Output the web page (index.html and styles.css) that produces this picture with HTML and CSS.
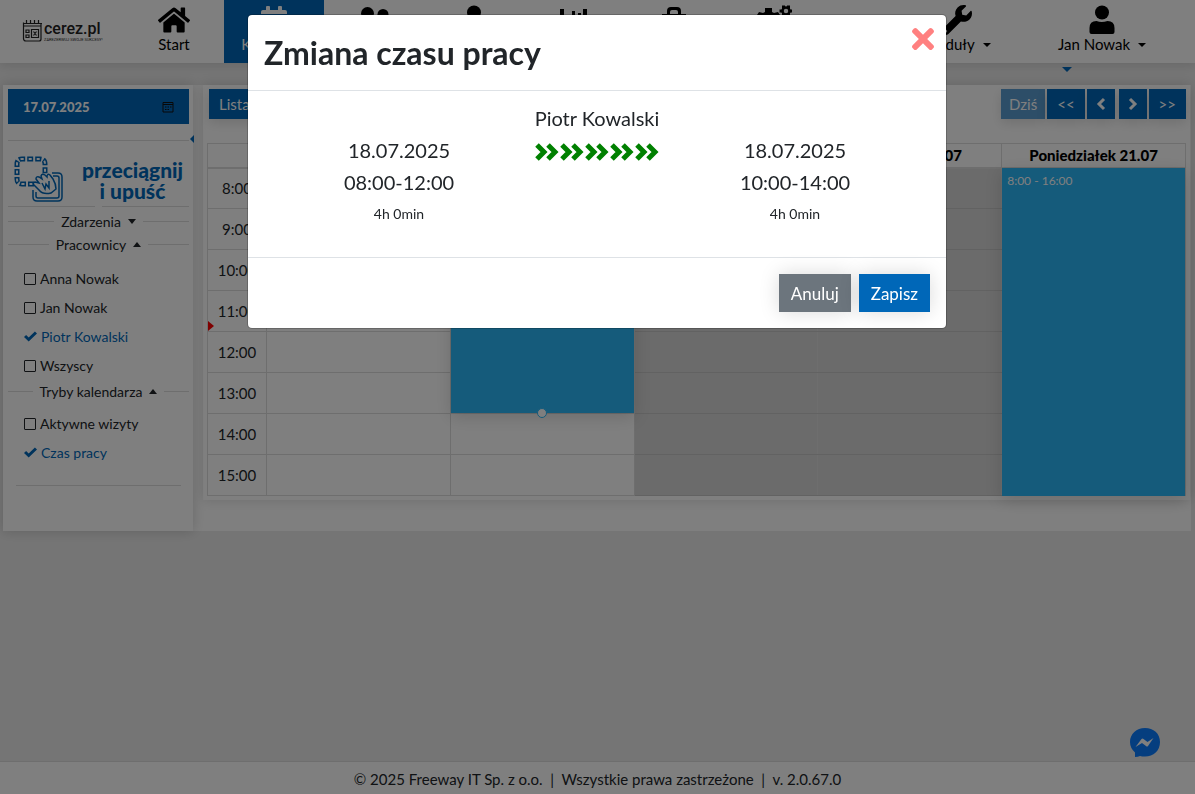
FILE: index.html
```html
<!DOCTYPE html>
<html lang="pl">
<head>
  <meta charset="utf-8">
  <title>cerez.pl - Kalendarz</title>
  <meta name="viewport" content="width=device-width, initial-scale=1.0">
  <link rel="stylesheet" href="styles.css">
</head>
<body>
  <header class="topbar">
    <a href="#" class="logo">
      <svg width="21" height="22" viewBox="0 0 21 22" fill="none" stroke="#222" stroke-width="1.2">
        <path d="M1 3.500h19M1.500 2.500v16q0 2.500 2.500 2.500h13q2 0 2-2v-15M4.500 0v4M8.500 0v4M12.500 0v4M16.500 0v4M1 6h18"/>
        <path d="M4 10h3v2.500H4zM4 15h3v2.500H4zM9.500 9.500h7v8h-7zM11.500 11.500l3 4M14.500 11.500l-3 4"/>
      </svg>
      <span class="logo-text">
        <span class="logo-name">cerez.pl</span>
        <span class="logo-sub">ZAREZERWUJ SWOJE SUKCESY!</span>
      </span>
    </a>
    <nav class="nav">
      <a href="#" class="nav-item">
        <svg class="nav-icon" viewBox="0 0 576 512"><path d="M280.37 148.26L96 300.11V464a16 16 0 0 0 16 16l112.06-.29a16 16 0 0 0 15.92-16V368a16 16 0 0 1 16-16h64a16 16 0 0 1 16 16v95.64a16 16 0 0 0 16 16.05L464 480a16 16 0 0 0 16-16V300L295.67 148.26a12.19 12.19 0 0 0-15.3 0zM571.6 251.47L488 182.56V44.05a12 12 0 0 0-12-12h-56a12 12 0 0 0-12 12v72.61L318.47 43a48 48 0 0 0-61 0L4.34 251.47a12 12 0 0 0-1.6 16.9l25.5 31A12 12 0 0 0 45.15 301l235.22-193.74a12.19 12.19 0 0 1 15.3 0L530.9 301a12 12 0 0 0 16.9-1.6l25.5-31a12 12 0 0 0-1.7-16.93z"/></svg>
        <span>Start</span>
      </a>
      <a href="#" class="nav-item active">
        <svg class="nav-icon" viewBox="0 0 32 30"><path d="M3 9V7q0-2 2-2h3V2q0-1 1-1h2q1 0 1 1v3h8V2q0-1 1-1h2q1 0 1 1v3h3q2 0 2 2v2zM3 11h26v16q0 2-2 2H5q-2 0-2-2z"/></svg>
        <span>Kalendarz</span>
      </a>
      <a href="#" class="nav-item" aria-label="Klienci">
        <svg class="nav-icon" viewBox="0 0 32 30"><circle cx="9.500" cy="8.500" r="6.500"/><circle cx="25" cy="9.500" r="5.500"/><path d="M0 26v-3q0-6 6-6h7q6 0 6 6v3zM21 26v-4q0-3-1-4h7q5 0 5 5v3z"/></svg>
      </a>
      <a href="#" class="nav-item" aria-label="Pracownicy">
        <svg class="nav-icon" viewBox="0 0 32 30"><circle cx="16" cy="7.500" r="7"/><path d="M3 29v-5q0-7 7-7h12q7 0 7 7v5z"/></svg>
      </a>
      <a href="#" class="nav-item" aria-label="Raporty">
        <svg class="nav-icon" viewBox="0 0 32 30"><path d="M2 4h4v22H2zM8 15h3v9H8zM14 6h3v18h-3zM20 8h3v16h-3zM25 4h4v20h-4zM2 26h28v3H2z"/></svg>
      </a>
      <a href="#" class="nav-item" aria-label="Magazyn">
        <svg class="nav-icon" viewBox="0 0 32 30"><path d="M9 9V6q0-4 4-4h6q4 0 4 4v3h5v19H4V9zM12 9h8V7q0-2-2-2h-4q-2 0-2 2z" fill-rule="evenodd"/></svg>
      </a>
      <a href="#" class="nav-item" aria-label="Ustawienia">
        <svg class="nav-icon" viewBox="0 0 32 30"><path d="M-1 10l2-3 4 1 2-1V3h7v4l2 1 4-1 2 3 1 5-2 2-2 5-4 1-1 4H7l-1-4-4-1-3-5 2-2z"/><circle cx="28" cy="6" r="3.500" fill="none" stroke="#000" stroke-width="2.500"/><path d="M24 .5h3V4h-3zM29 .5h3V4h-3zM21.500 4.500H24v3h-2.500zM32 4.500h2v3h-2zM24 8h3v3.500h-3zM29 8h3v3.500h-3z"/></svg>
      </a>
      <a href="#" class="nav-item nav-modules">
        <svg class="nav-icon" viewBox="0 0 512 512"><path d="M507.73 109.1c-2.24-9.03-13.54-12.09-20.12-5.51l-74.36 74.36-67.88-11.31-11.31-67.88 74.36-74.36c6.62-6.62 3.43-17.9-5.66-20.16-47.38-11.74-99.55.91-136.58 37.93-39.64 39.64-50.55 97.1-34.05 147.2L18.74 402.76c-24.99 24.99-24.99 65.51 0 90.5 24.99 24.99 65.51 24.99 90.5 0l213.21-213.21c50.12 16.71 107.47 5.68 147.37-34.22 37.07-37.07 49.7-89.32 37.91-136.73zM64 472c-13.25 0-24-10.75-24-24 0-13.26 10.75-24 24-24s24 10.74 24 24c0 13.25-10.75 24-24 24z"/></svg>
        <span class="caret">Moduły</span>
      </a>
      <a href="#" class="nav-item nav-user">
        <svg class="nav-icon" viewBox="0 0 32 30"><circle cx="16" cy="7.500" r="7"/><path d="M3.500 27v-4q0-7 7-7 5 2 11 0 7 0 7 7v4q0 2-2 2h-21q-2 0-2-2z"/></svg>
        <span class="caret">Jan Nowak</span>
      </a>
    </nav>
    <span class="topbar-toggle"></span>
  </header>

  <main class="page">
    <aside class="sidebar">
      <span class="sidebar-toggle"></span>
      <button type="button" class="date">
        17.07.2025
        <svg width="12" height="12" viewBox="0 0 12 12" fill="none" stroke="#111"><path d="M1 1.500h10v9.500H1zM1 3.500h10M3 6h1.500M5.500 6H7M8 6h1.500M3 8.500h1.500M5.500 8.500H7"/></svg>
      </button>
      <hr class="line">
      <div class="drag">
        <svg width="50" height="47" viewBox="0 0 50 47" fill="none" stroke="#0067b8">
          <path d="M20 28H8q-5 0-5-5V8q0-5 5-5h18q5 0 5 5v10" stroke-width="5" stroke-dasharray="6 2"/>
          <path d="M20 28H8q-5 0-5-5V8q0-5 5-5h18q5 0 5 5v10" stroke="#fff" stroke-width="2" stroke-dasharray="3 5" stroke-dashoffset="-1.500"/>
          <path d="M38 17h6q4 0 4 4v20q0 4-4 4H23q-4 0-4-4v-7M39 20h4q2 0 2 2v18q0 2-2 2H24q-2 0-2-2v-4" stroke-width="1.500"/>
          <path d="M20 29q-2-2 1-3l4 1-3-4q0-3 3-2l3 2-1-3q1-3 4-1l2 2q0-4 3-2l3 4q3 5 3 10l-5 4q-8 2-12-3zM28 27l3 6 1-5 3 4V25" fill="#fff" stroke-width="1.500"/>
        </svg>
        <span class="drag-text">przeciągnij<br>i upuść</span>
      </div>
      <div class="divider divider-empty"></div>
      <button type="button" class="divider">Zdarzenia <i class="arrow down"></i></button>
      <button type="button" class="divider">Pracownicy <i class="arrow up"></i></button>
      <div class="checks">
        <label><input type="checkbox">Anna Nowak</label>
        <label><input type="checkbox">Jan Nowak</label>
        <label><input type="checkbox" checked>Piotr Kowalski</label>
        <label><input type="checkbox">Wszyscy</label>
      </div>
      <button type="button" class="divider">Tryby kalendarza <i class="arrow up"></i></button>
      <div class="checks checks-modes">
        <label><input type="checkbox">Aktywne wizyty</label>
        <label><input type="checkbox" checked>Czas pracy</label>
      </div>
      <hr class="line line-short">
    </aside>

    <section class="calendar">
      <div class="toolbar">
        <button type="button" class="tool tool-list">Lista</button>
        <button type="button" class="tool tool-today" disabled>Dziś</button>
        <button type="button" class="tool">&lt;&lt;</button>
        <button type="button" class="tool tool-arrow" aria-label="Poprzedni"><svg width="10" height="14" viewBox="0 0 10 14"><path d="M8 2L3 7l5 5"/></svg></button>
        <button type="button" class="tool tool-arrow tool-next" aria-label="Następny"><svg width="10" height="14" viewBox="0 0 10 14"><path d="M2 2l5 5-5 5"/></svg></button>
        <button type="button" class="tool">&gt;&gt;</button>
      </div>
      <table class="grid">
        <thead>
          <tr>
            <th class="hour"></th>
            <th>Czwartek 17.07</th>
            <th>Piątek 18.07</th>
            <th>Sobota 19.07</th>
            <th>Niedziela 20.07</th>
            <th>Poniedziałek 21.07</th>
          </tr>
        </thead>
        <tbody>
          <tr>
            <td class="hour">8:00</td>
            <td></td>
            <td><div class="event event-short" aria-label="8:00 - 14:00"><span class="handle"></span></div></td>
            <td class="off"></td>
            <td class="off"></td>
            <td><div class="event">8:00 - 16:00</div></td>
          </tr>
          <tr><td class="hour">9:00</td><td></td><td></td><td class="off"></td><td class="off"></td><td></td></tr>
          <tr><td class="hour">10:00</td><td></td><td></td><td class="off"></td><td class="off"></td><td></td></tr>
          <tr><td class="hour">11:00<span class="now"></span></td><td></td><td></td><td class="off"></td><td class="off"></td><td></td></tr>
          <tr><td class="hour">12:00</td><td></td><td></td><td class="off"></td><td class="off"></td><td></td></tr>
          <tr><td class="hour">13:00</td><td></td><td></td><td class="off"></td><td class="off"></td><td></td></tr>
          <tr><td class="hour">14:00</td><td></td><td></td><td class="off"></td><td class="off"></td><td></td></tr>
          <tr><td class="hour">15:00</td><td></td><td></td><td class="off"></td><td class="off"></td><td></td></tr>
        </tbody>
      </table>
    </section>
  </main>

  <footer class="footer">© 2025 Freeway IT Sp. z o.o. &nbsp;|&nbsp; Wszystkie prawa zastrzeżone &nbsp;|&nbsp; v. 2.0.67.0</footer>

  <a href="#" class="messenger" aria-label="Messenger">
    <svg width="30" height="30" viewBox="0 0 30 30"><path d="M15 0C6.500 0 0 6 0 14q0 6 5 10.500V29q3 0 5-1 2 .6 5 .6c8.500 0 15-6 15-14.600S23.500 0 15 0z" fill="#0a7cff"/><path d="M5.500 19l6-8q1-1 2 0l4 3 6-4-5.500 8q-1 1-2 0l-4-3z" fill="#fff"/></svg>
  </a>

  <div class="backdrop"></div>

  <div class="modal" role="dialog" aria-labelledby="modal-title">
    <div class="modal-header">
      <h2 id="modal-title">Zmiana czasu pracy</h2>
      <button type="button" class="close" aria-label="Zamknij">
        <svg width="22" height="32" viewBox="0 0 352 512"><path d="M242.72 256l100.07-100.07c12.28-12.28 12.28-32.19 0-44.48l-22.24-22.24c-12.28-12.28-32.19-12.28-44.48 0L176 189.28 75.93 89.21c-12.28-12.28-32.19-12.28-44.48 0L9.21 111.45c-12.28 12.28-12.28 32.19 0 44.48L109.28 256 9.21 356.07c-12.28 12.28-12.28 32.19 0 44.48l22.24 22.24c12.28 12.28 32.2 12.28 44.48 0L176 322.72l100.07 100.07c12.28 12.28 32.2 12.28 44.48 0l22.24-22.24c12.28-12.28 12.28-32.19 0-44.48L242.72 256z"/></svg>
      </button>
    </div>
    <div class="modal-body">
      <div class="person">Piotr Kowalski</div>
      <div class="change">
        <div>
          <p>18.07.2025</p>
          <p>08:00-12:00</p>
          <p class="small">4h 0min</p>
        </div>
        <div>
          <svg class="chevrons" width="126" height="20" viewBox="0 0 126 20"><path d="M3 3l7 7-7 7M14 3l7 7-7 7M28 3l7 7-7 7M39 3l7 7-7 7M53 3l7 7-7 7M64 3l7 7-7 7M78 3l7 7-7 7M89 3l7 7-7 7M103 3l7 7-7 7M114 3l7 7-7 7"/></svg>
        </div>
        <div>
          <p>18.07.2025</p>
          <p>10:00-14:00</p>
          <p class="small">4h 0min</p>
        </div>
      </div>
    </div>
    <div class="modal-footer">
      <button type="button" class="btn btn-cancel">Anuluj</button>
      <button type="button" class="btn btn-save">Zapisz</button>
    </div>
  </div>
</body>
</html>
```
FILE: styles.css
```css
* {
  box-sizing: border-box;
}

body {
  margin: 0;
  min-height: 100vh;
  display: flex;
  flex-direction: column;
  background: #ebebeb;
  color: #212529;
  font-family: "Century Gothic", Lato, sans-serif;
  font-size: 15px;
}

a {
  color: inherit;
  text-decoration: none;
}

button {
  border: 0;
  font-family: inherit;
  cursor: pointer;
}

p {
  margin: 0;
}

/* top bar */
.topbar {
  position: relative;
  display: flex;
  height: 63px;
  background: #fff;
  color: #000;
  box-shadow: 0 2px 10px rgba(0, 0, 0, .12);
}

.logo {
  display: flex;
  align-items: center;
  gap: 1px;
  width: 124px;
  padding-left: 22px;
  padding-bottom: 2px;
  color: #222;
}

.logo-text {
  display: flex;
  flex-direction: column;
  font-family: Roboto, "Open Sans", sans-serif;
}

.logo-name {
  font-size: 16px;
  line-height: 18px;
  font-weight: 500;
}

.logo-sub {
  font-size: 4px;
  line-height: 4px;
}

.logo-name,
.logo-sub {
  white-space: nowrap;
}

.nav {
  display: flex;
  flex: 1;
}

.nav-item {
  display: flex;
  flex-direction: column;
  align-items: center;
  width: 100px;
  padding-top: 5px;
  line-height: 18px;
}

.nav-icon {
  width: 32px;
  height: 30px;
  overflow: visible;
}

.nav-item.active {
  background: #0067b8;
  color: #fff;
  fill: #fff;
}

.nav-modules {
  margin-left: auto;
  margin-right: 45px;
}

.nav-user {
  margin-right: 43px;
}

.caret::after {
  content: "";
  display: inline-block;
  margin-left: 8px;
  vertical-align: 3px;
  border: 4px solid transparent;
  border-top-color: #000;
  border-bottom: 0;
}

.topbar-toggle {
  position: absolute;
  right: 123px;
  bottom: -9px;
  border: 5px solid transparent;
  border-top-color: #0067b8;
  border-bottom: 0;
}

/* page */
.page {
  display: flex;
  align-items: stretch;
  gap: 10px;
  margin: 22px 4px 0 3px;
  background: #fff;
}

.sidebar {
  position: relative;
  width: 190px;
  padding: 4px 4px 45px 5px;
  box-shadow: 0 0 12px rgba(0, 0, 0, .18);
}

.sidebar-toggle {
  position: absolute;
  right: -1px;
  top: 50px;
  border: 4px solid transparent;
  border-right-color: #0067b8;
  border-left: 0;
}

.date {
  display: flex;
  align-items: center;
  justify-content: space-between;
  width: 100%;
  height: 35px;
  padding: 0 15px;
  background: #0067b8;
  color: #fff;
  font-size: 13px;
  font-weight: 900;
}

.line {
  margin: 16px 0 15px;
  border: 0;
  border-top: 1px solid #dcdcdc;
}

.line-short {
  margin: 18px 8px 0;
}

.drag {
  display: flex;
  justify-content: space-between;
  padding: 0 6px;
}

.drag-text {
  padding-top: 3px;
  color: #0067b8;
  font-size: 21px;
  line-height: 21px;
  font-weight: 900;
  text-align: center;
}

.divider {
  display: flex;
  align-items: center;
  gap: 7px;
  width: 100%;
  height: 23px;
  padding: 0 0 1px;
  background: none;
  color: #212529;
  font-size: 14px;
  white-space: nowrap;
}

.divider::before,
.divider::after {
  content: "";
  flex: 1;
  border-top: 1px solid #dcdcdc;
}

.divider-empty {
  height: 7px;
}

.arrow {
  border: 4px solid transparent;
}

.arrow.down {
  border-top: 5px solid #212529;
  border-bottom: 0;
}

.arrow.up {
  border-bottom: 5px solid #212529;
  border-top: 0;
}

.checks {
  display: flex;
  flex-direction: column;
  padding: 8px 16px 0;
  font-size: 14px;
}

.checks-modes {
  padding-top: 6px;
}

.checks label {
  display: flex;
  align-items: center;
  gap: 4px;
  height: 29px;
}

.checks input {
  appearance: none;
  width: 12px;
  height: 12px;
  margin: 0;
  border: 1px solid #212529;
  border-radius: 1px;
}

.checks label:has(input:checked) {
  color: #0067b8;
}

.checks input:checked {
  width: 13px;
  border: 0;
  background: #0067b8;
  clip-path: polygon(0 55%, 16% 38%, 36% 58%, 84% 8%, 100% 25%, 36% 92%);
}

/* calendar */
.calendar {
  flex: 1;
  align-self: flex-start;
  margin-right: 1px;
  padding: 4px;
  box-shadow: 0 0 12px rgba(0, 0, 0, .15);
}

.toolbar {
  display: flex;
  gap: 2px;
  padding-left: 2px;
}

.tool {
  height: 30px;
  padding: 0 10px;
  background: #0067b8;
  color: #fff;
  font-size: 15px;
  box-shadow: 0 4px 12px rgba(0, 0, 0, .12);
}

.tool-list {
  margin-right: auto;
}

.tool-today {
  padding: 0 8px;
  background: #5a9cd0;
}

.tool-arrow {
  width: 28px;
  padding: 0;
}

.tool-arrow svg {
  display: block;
  margin: 0 auto;
}

.tool-arrow path {
  fill: none;
  stroke: #fff;
  stroke-width: 3px;
}

.tool-next {
  margin-left: 2px;
}

.grid {
  width: 100%;
  margin-top: 24px;
  border-collapse: collapse;
  table-layout: fixed;
}

.grid th,
.grid td {
  position: relative;
  padding: 0;
  border: 1px solid #dcdcdc;
}

.grid th {
  height: 24px;
  border-bottom-width: 2px;
  color: #000;
  line-height: 18px;
  font-weight: 900;
}

.grid td {
  height: 41px;
}

.grid .hour {
  width: 59px;
  text-align: center;
}

.grid .off {
  background: #d6d6d6;
  border-color: #c4c4c4 #dcdcdc;
}

.event {
  position: absolute;
  z-index: 1;
  top: -1px;
  left: 0;
  right: 0;
  height: 328px;
  padding: 5px;
  background: #2ab6f6;
  color: #fff;
  font-size: 12px;
  box-shadow: 0 4px 16px rgba(0, 0, 0, .15);
}

.event-short {
  height: 245px;
}

.handle {
  position: absolute;
  left: calc(50% - 5px);
  bottom: -5px;
  width: 10px;
  height: 10px;
  border: 1px solid #2ab6f6;
  border-radius: 50%;
  background: #fff;
}

.now {
  position: absolute;
  left: 0;
  bottom: 0;
  border: 5px solid transparent;
  border-left: 6px solid #f00;
  border-right: 0;
}

.footer {
  margin-top: auto;
  padding: 7px 0 5px;
  border-top: 1px solid #dcdcdc;
  background: #fff;
  line-height: 20px;
  text-align: center;
}

.messenger {
  position: fixed;
  right: 35px;
  bottom: 36px;
  height: 30px;
}

/* modal */
.backdrop {
  position: fixed;
  z-index: 5;
  inset: 0;
  background: rgba(0, 0, 0, .5);
}

.modal {
  position: fixed;
  z-index: 10;
  top: 14px;
  left: 0;
  right: 1px;
  max-width: 700px;
  margin: 0 auto;
  border: 1px solid rgba(0, 0, 0, .2);
  border-radius: 5px;
  background: #fff;
  background-clip: padding-box;
}

.modal-header {
  display: flex;
  justify-content: space-between;
  padding: 16px;
  border-bottom: 1px solid #dee2e6;
}

.modal-header h2 {
  margin: 0;
  font-size: 32px;
  line-height: 43px;
  font-weight: 700;
}

.close {
  height: 32px;
  margin: -8px -4px 0 0;
  padding: 0;
  background: none;
}

.close svg {
  display: block;
  fill: #ff8080;
}

.modal-body {
  padding: 11px 52px 28px;
  font-size: 20px;
  line-height: 32px;
  text-align: center;
}

.change {
  display: grid;
  grid-template-columns: 1fr 1fr 1fr;
}

.change .small {
  font-size: 14px;
  line-height: 31px;
}

.chevrons {
  display: block;
  margin: 8px auto;
  fill: none;
  stroke: #008000;
  stroke-width: 5px;
}

.modal-footer {
  display: flex;
  justify-content: flex-end;
  gap: 8px;
  padding: 16px;
  border-top: 1px solid #dee2e6;
}

.btn {
  height: 38px;
  padding: 0 12px;
  color: #fff;
  font-size: 17px;
  box-shadow: 0 0 20px rgba(0, 0, 0, .15);
}

.btn-cancel {
  background: #6c757d;
}

.btn-save {
  background: #0067b8;
}
```
